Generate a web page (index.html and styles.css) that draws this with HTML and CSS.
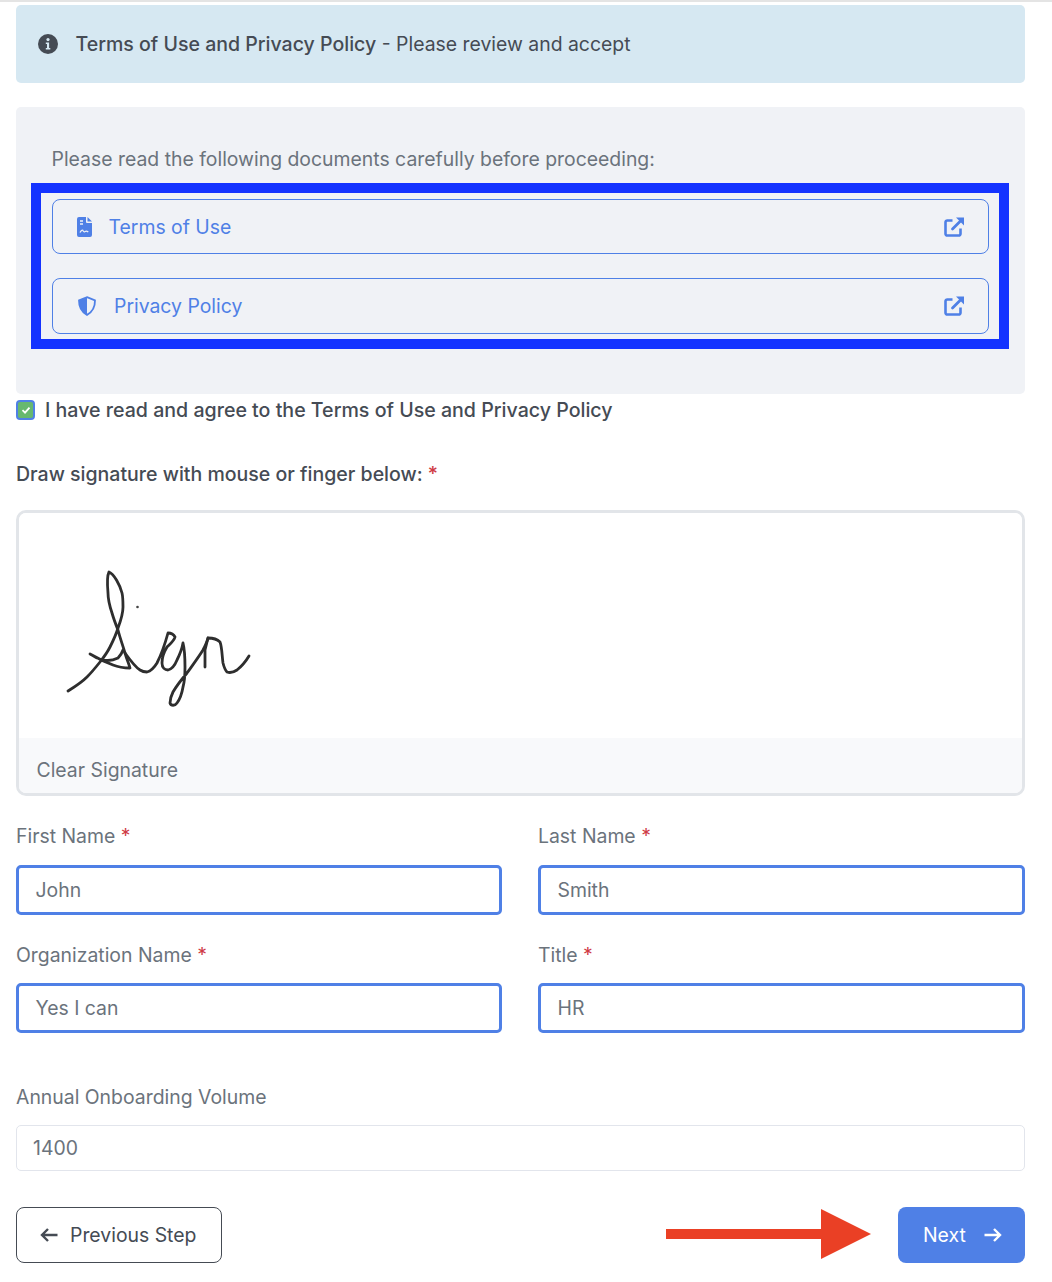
FILE: index.html
```html
<!DOCTYPE html>
<html lang="en">
<head>
<meta charset="utf-8">
<title>Terms of Use and Privacy Policy</title>
<link rel="stylesheet" href="styles.css">
</head>
<body>
<div class="topline"></div>
<main class="page">
  <div class="alert">
    <svg class="alert-icon" viewBox="0 0 20 20"><circle cx="10" cy="10" r="10" fill="#454b54"/><circle cx="10" cy="5.6" r="1.6" fill="#d6e8f2"/><path d="M7.8 8.6h3.3v5.4h1.2v1.5H7.8V14H9v-3.9H7.8z" fill="#d6e8f2"/></svg>
    <span><span class="alert-title">Terms of Use and Privacy Policy</span> - Please review and accept</span>
  </div>

  <section class="panel">
    <p class="panel-text">Please read the following documents carefully before proceeding:</p>
    <div class="highlight">
      <a class="doc-link doc-first">
        <svg class="doc-icon" viewBox="0 0 15 20"><path fill="#4f80e6" d="M2 0h7v5a1 1 0 0 0 1 1h5v12a2 2 0 0 1-2 2H2a2 2 0 0 1-2-2V2a2 2 0 0 1 2-2z"/><path fill="#4f80e6" d="M10.500 0 15 4.500h-4.500z"/><path d="M3 4h3M3 7h3" stroke="#f0f1f6" stroke-width="1.400"/><path d="M3 15.500c1.500-2.500 2.500-3 3.300-1.500.6 1 1.300 1.200 2 .4.700-.6 1.800-.3 3 .6" fill="none" stroke="#f0f1f6" stroke-width="1.300"/></svg>
        <span class="doc-label">Terms of Use</span>
        <svg class="ext-icon" viewBox="0 0 20 20"><path d="M16.500 11.500v5.200a1.800 1.800 0 0 1-1.800 1.800H3.300a1.800 1.800 0 0 1-1.800-1.800V5.300a1.800 1.800 0 0 1 1.800-1.800h5.200" fill="none" stroke="#4f80e6" stroke-width="2.600"/><path d="M8.500 12 17 3.500" stroke="#4f80e6" stroke-width="2.800" stroke-linecap="round"/><path d="M12 .5h8v8z" fill="#4f80e6"/></svg>
      </a>
      <a class="doc-link doc-second">
        <svg class="shield-icon" viewBox="0 0 20 20"><path fill="none" stroke="#4f80e6" stroke-width="1.800" d="M10 1.200 18 4.300c.1 6.500-2.400 11.600-8 14.600-5.600-3-8.100-8.100-8-14.600z"/><path fill="#4f80e6" d="M10 1.200 2 4.300c-.1 6.500 2.400 11.600 8 14.600z"/></svg>
        <span class="doc-label">Privacy Policy</span>
        <svg class="ext-icon" viewBox="0 0 20 20"><path d="M16.500 11.500v5.200a1.800 1.800 0 0 1-1.800 1.800H3.300a1.800 1.800 0 0 1-1.800-1.800V5.300a1.800 1.800 0 0 1 1.800-1.800h5.200" fill="none" stroke="#4f80e6" stroke-width="2.600"/><path d="M8.500 12 17 3.500" stroke="#4f80e6" stroke-width="2.800" stroke-linecap="round"/><path d="M12 .5h8v8z" fill="#4f80e6"/></svg>
      </a>
    </div>
  </section>

  <label class="agree">
    <span class="checkbox"><svg viewBox="0 0 10 10"><path d="M1.500 5.200 4 7.600 8.500 2.600" fill="none" stroke="#fff" stroke-width="1.800"/></svg></span>
    <span>I have read and agree to the Terms of Use and Privacy Policy</span>
  </label>

  <div class="sig-label">Draw signature with mouse or finger below: <span class="req">*</span></div>
  <div class="sig-box">
    <div class="sig-canvas">
      <svg class="sig-drawing" viewBox="0 0 240 170">
        <g fill="none" stroke="#2e2e2e" stroke-width="2.800" stroke-linecap="round" stroke-linejoin="round">
          <path d="M28 141C36 136 41 133 47 127C52 122 56 117 60 112C64 107 67 103 70 97C73 91 76 85 78 78C81 70 83 64 83 57C83 52 83 47 82 43C80 35 74 24 69 22C68 24 67 32 68 43C68 50 70 57 72 63C74 70 76 75 78 80C80 88 83 96 85 103C87 110 89 114 90 118C84 118 78 117 73 115C65 112 57 108 50 104C54 107 58 109 63 110C68 111 74 110 78 108C80 106 82 103 83 100"/>
          <path d="M85 103C90 110 95 117 100 120C103 122 105 122 107 122C111 121 114 118 117 113C121 105 125 94 128 83C131 83 134 85 135 87C134 91 130 94 127 97C124 102 122 108 122 113C122 118 125 120 128 120C132 119 135 115 137 110C140 104 142 99 143 93C145 101 145 109 145 117C145 124 145 130 143 137C142 143 140 149 137 153C135 156 131 156 130 153C130 149 131 146 133 142C137 135 142 129 147 123C152 116 158 108 163 100C165 96 167 92 168 88"/>
          <path d="M165 117C165 110 165 105 165 100C166 96 167 92 168 88C172 88 177 89 180 92C182 97 182 106 183 113C184 117 185 120 187 122C190 123 194 122 197 120C202 116 206 111 209 106"/>
        </g>
        <circle cx="97.500" cy="57" r="1.300" fill="#444"/>
      </svg>
    </div>
    <div class="sig-footer">Clear Signature</div>
  </div>

  <div class="field-grid">
    <div class="field">
      <div class="field-label">First Name <span class="req">*</span></div>
      <div class="input input-focus">John</div>
    </div>
    <div class="field">
      <div class="field-label">Last Name <span class="req">*</span></div>
      <div class="input input-focus">Smith</div>
    </div>
    <div class="field">
      <div class="field-label">Organization Name <span class="req">*</span></div>
      <div class="input input-focus">Yes I can</div>
    </div>
    <div class="field">
      <div class="field-label">Title <span class="req">*</span></div>
      <div class="input input-focus">HR</div>
    </div>
  </div>

  <div class="volume">
    <div class="field-label">Annual Onboarding Volume</div>
    <div class="input input-plain">1400</div>
  </div>

  <div class="actions">
    <button class="btn btn-back" type="button">
      <svg class="btn-arrow" viewBox="0 0 18 16"><path d="M17.500 8H2M8 2 2 8l6 6" fill="none" stroke="#454b54" stroke-width="2.400"/></svg>
      Previous Step
    </button>
    <svg class="callout" viewBox="0 0 205 50"><path d="M0 20h155V0l50 25-50 25V30H0z" fill="#ea4025"/></svg>
    <button class="btn btn-next" type="button">
      Next
      <svg class="btn-arrow" viewBox="0 0 18 16"><path d="M.5 8H16M10 2l6 6-6 6" fill="none" stroke="#fff" stroke-width="2.400"/></svg>
    </button>
  </div>
</main>
</body>
</html>
```
FILE: styles.css
```css
* { box-sizing: border-box; }
html, body { margin: 0; padding: 0; background: #fff; }
body { font-family: Inter, "Liberation Sans", sans-serif; font-size: 19.4px; line-height: 24px; color: #6b737c; }
.topline { height: 2px; background: #e4e4e4; }
.page { padding: 3px 27px 0 16px; }

.alert { height: 78px; background: #d6e8f2; border-radius: 5px; padding-left: 22px; display: flex; align-items: center; gap: 17.5px; color: #454b54; }
.alert-icon { width: 20px; height: 20px; flex: none; }
.alert-title { font-weight: 500; font-size: 19.55px; }

.panel { margin-top: 24px; height: 287px; background: #f0f2f6; border-radius: 5px; padding: 40px 16px 0 15px; }
.panel-text { margin: 0 0 0 20.5px; line-height: 24px; height: 36px; }
.highlight { height: 166px; border: 10px solid #1433ff; padding: 6px 10px 0 11px; }
.doc-link { display: flex; align-items: center; border: 1px solid #4f80e6; border-radius: 8px; color: #4f80e6; padding: 0 24px; }
.doc-first { height: 55px; margin-bottom: 24px; }
.doc-second { height: 56px; }
.doc-icon { width: 15px; height: 20px; flex: none; margin-right: 16.5px; }
.shield-icon { width: 20px; height: 20px; flex: none; margin-right: 17px; }
.doc-label { flex: 1; }
.ext-icon { width: 20px; height: 20px; flex: none; }

.agree { display: flex; align-items: center; gap: 10px; margin-top: 6px; height: 20px; font-size: 19.6px; font-weight: 500; color: #454b54; }
.checkbox { width: 19px; height: 20px; border-radius: 4px; border: 2.5px solid #4f80e6; background: #67b86f; display: flex; align-items: center; justify-content: center; }
.checkbox svg { width: 10px; height: 10px; }

.sig-label { margin-top: 42px; font-size: 19.55px; font-weight: 500; color: #454b54; }
.req { color: #cf3a45; }
.sig-box { margin-top: 24px; height: 286px; border: 3px solid #e2e5e9; border-radius: 10px; overflow: hidden; display: flex; flex-direction: column; }
.sig-canvas { height: 225px; background: #fff; border-radius: 0 0 8px 8px; position: relative; }
.sig-drawing { position: absolute; left: 21px; top: 37px; width: 240px; height: 170px; }
.sig-footer { flex: 1; background: #f8f9fb; padding: 20px 0 0 17.5px; }

.field-grid { display: grid; grid-template-columns: 486px 487px; column-gap: 36px; row-gap: 28px; margin-top: 28px; }
.field-label { height: 24px; }
.input { display: flex; align-items: center; background: #fff; }
.field .input { margin-top: 17px; }
.input-focus { height: 50px; border: 3px solid #4f80e6; border-radius: 5px; padding-left: 16.5px; }
.field:nth-child(n+3) .input-focus { margin-top: 16px; }

.volume { margin-top: 52px; }
.input-plain { margin-top: 16px; height: 46px; border: 1px solid #e2e5ec; border-radius: 5px; padding-left: 16px; }

.actions { margin-top: 36px; display: flex; align-items: center; justify-content: space-between; position: relative; }
.btn { height: 56px; font: inherit; border-radius: 8px; display: flex; align-items: center; cursor: pointer; }
.btn-back { width: 206px; padding: 0 0 0 23px; gap: 12px; background: #fff; border: 1px solid #454b54; color: #454b54; }
.btn-next { width: 127px; padding: 0 0 0 25px; gap: 18px; background: #4f80e6; border: 0; color: #fff; }
.btn-arrow { width: 18px; height: 16px; flex: none; }
.callout { position: absolute; left: 650px; top: 2px; width: 205px; height: 50px; }
```
